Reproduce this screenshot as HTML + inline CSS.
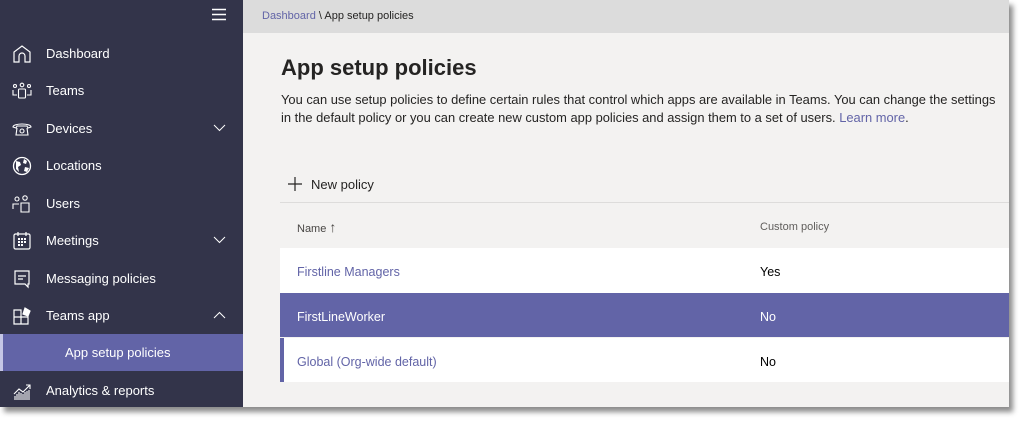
<!DOCTYPE html>
<html><head><meta charset="utf-8"><style>
*{margin:0;padding:0;box-sizing:border-box}
body{width:1024px;height:422px;background:#fff;font-family:"Liberation Sans",sans-serif;position:relative;overflow:hidden}
#frame{position:absolute;left:0;top:0;width:1009px;height:407px;background:#f3f2f1;box-shadow:4px 5px 5px rgba(0,0,0,0.45);overflow:hidden}
#side{position:absolute;left:0;top:0;width:243px;height:407px;background:#33344a;color:#fff}
.it{position:absolute;left:0;width:243px;height:37px;font-size:13px;line-height:37px}
.it span{position:absolute;left:46px}
.it svg{position:absolute;left:12px;top:9px}
.it svg.chev{position:absolute;left:213px;top:14px}
#hdr{position:absolute;left:243px;top:0;width:766px;height:33px;background:#dcdcdc;font-size:11px;line-height:32px;padding-left:19px;color:#252423}
#hdr a{color:#6264a7;text-decoration:none}
h1{position:absolute;left:281px;top:55px;font-size:22px;font-weight:bold;color:#252423}
.desc{position:absolute;left:281px;font-size:12.9px;color:#252423;white-space:nowrap}
.tab{position:absolute;left:280px;width:729px;height:45px;font-size:12.5px;line-height:48px}
.tab .a{position:absolute;left:17px}
.tab .b{position:absolute;left:480px}
</style></head><body>
<div id="frame">
<div id="side">
<svg style="position:absolute;left:211px;top:8px" width="16" height="13"><path d="M1 1.5h14M1 6.5h14M1 11.5h14" stroke="#fff" stroke-width="1.6"/></svg>
<div class="it" style="top:35px"><svg width="20" height="20" fill="none" stroke="#fff" stroke-width="1.2"><path d="M2 18V8l8-6 8 6v10h-5v-6a3 3 0 0 0-6 0v6z"/></svg><span>Dashboard</span></div>
<div class="it" style="top:72px"><svg width="20" height="20" fill="none" stroke="#fff" stroke-width="1.1"><circle cx="3" cy="5" r="1.5"/><circle cx="10" cy="4" r="1.8"/><circle cx="17" cy="5" r="1.5"/><rect x="6.5" y="8" width="7" height="9" rx="1"/><path d="M1 9v5h4M19 9v5h-4"/></svg><span>Teams</span></div>
<div class="it" style="top:110px"><svg width="20" height="20" fill="none" stroke="#fff" stroke-width="1.1"><path d="M1 8c0-4 18-4 18 0l-3 1-1-2H5L4 9z"/><path d="M5 9l-1 7h12l-1-7"/><circle cx="10" cy="12" r="2"/></svg><span>Devices</span><svg class="chev" width="13" height="8"><path d="M1 1l5.5 5.5L12 1" stroke="#fff" fill="none"/></svg></div>
<div class="it" style="top:147px"><svg width="20" height="20"><circle cx="10" cy="10" r="8.5" fill="none" stroke="#fff" stroke-width="1.3"/><path d="M4 5l4 1 1 3-3 2 1 5-3-3zM12 3l3 2-1 3-3-1zM13 11l4 1-2 4-3-1z" fill="#fff"/></svg><span>Locations</span></div>
<div class="it" style="top:185px"><svg width="20" height="20" fill="none" stroke="#fff" stroke-width="1.1"><circle cx="5" cy="5" r="2"/><circle cx="13" cy="4" r="2.2"/><path d="M1 15v-5h6M9 18V9h8v9z"/></svg><span>Users</span></div>
<div class="it" style="top:222px"><svg width="20" height="20" fill="none" stroke="#fff" stroke-width="1.2"><rect x="2" y="3" width="16" height="15" rx="1.5"/><path d="M6 1v4M14 1v4"/><path d="M6 8h2M9 8h2M12 8h2M6 11h2M9 11h2M12 11h2M6 14h2M9 14h2" stroke-width="2"/></svg><span>Meetings</span><svg class="chev" width="13" height="8"><path d="M1 1l5.5 5.5L12 1" stroke="#fff" fill="none"/></svg></div>
<div class="it" style="top:260px"><svg width="20" height="20" fill="none" stroke="#fff" stroke-width="1.2"><path d="M3 2h14v13h-1v3l-3-3H3z"/><path d="M6 7h8M6 10h5"/></svg><span>Messaging policies</span></div>
<div class="it" style="top:297px"><svg width="20" height="20" fill="none" stroke="#fff" stroke-width="1.2"><path d="M2 4h7v14H2zM2 11h14v7H9"/><path d="M13 2l5 3-2 5-5-2z" fill="#fff"/></svg><span>Teams app</span><svg class="chev" width="13" height="8"><path d="M1 7l5.5-5.5L12 7" stroke="#fff" fill="none"/></svg></div>
<div class="it" style="top:334px;height:37px;background:#6264a7;border-left:3px solid #c5c6e6"><span style="left:62px">App setup policies</span></div>
<div class="it" style="top:372px"><svg width="20" height="20" fill="none" stroke="#fff" stroke-width="1.1"><path d="M2 13l5-5 4 3 7-7M14 4h4v4"/><path d="M3 19v-4M5 19v-6M7 19v-8M9 19v-7M11 19v-6M13 19v-8M15 19v-9M17 19v-10"/></svg><span>Analytics &amp; reports</span></div>
</div>
<div id="hdr"><a>Dashboard</a> \ App setup policies</div>
<h1>App setup policies</h1>
<div class="desc" style="top:92px">You can use setup policies to define certain rules that control which apps are available in Teams. You can change the settings</div>
<div class="desc" style="top:110px">in the default policy or you can create new custom app policies and assign them to a set of users. <span style="color:#6264a7">Learn more</span>.</div>
<svg style="position:absolute;left:287px;top:176px" width="16" height="16"><path d="M8 1v14M1 8h14" stroke="#252423" stroke-width="1.2"/></svg>
<div style="position:absolute;left:311px;top:177px;font-size:13px;color:#252423">New policy</div>
<div style="position:absolute;left:280px;top:202px;width:729px;height:1px;background:#dddcdb"></div>
<div class="tab" style="top:203px;font-size:11px;color:#484644"><span class="a">Name <b style="font-weight:normal;font-size:14px">&#8593;</b></span><span class="b" style="color:#605e5c">Custom policy</span></div>
<div class="tab" style="top:248px;background:#fff"><span class="a" style="color:#6264a7">Firstline Managers</span><span class="b">Yes</span></div>
<div class="tab" style="top:293px;height:44px;background:#6264a7;color:#fff"><span class="a">FirstLineWorker</span><span class="b">No</span></div>
<div class="tab" style="top:338px;height:44px;background:#fff;border-left:4px solid #6264a7"><span class="a" style="left:13px;color:#6264a7">Global (Org-wide default)</span><span class="b" style="left:476px">No</span></div>
</div>
</body></html>
